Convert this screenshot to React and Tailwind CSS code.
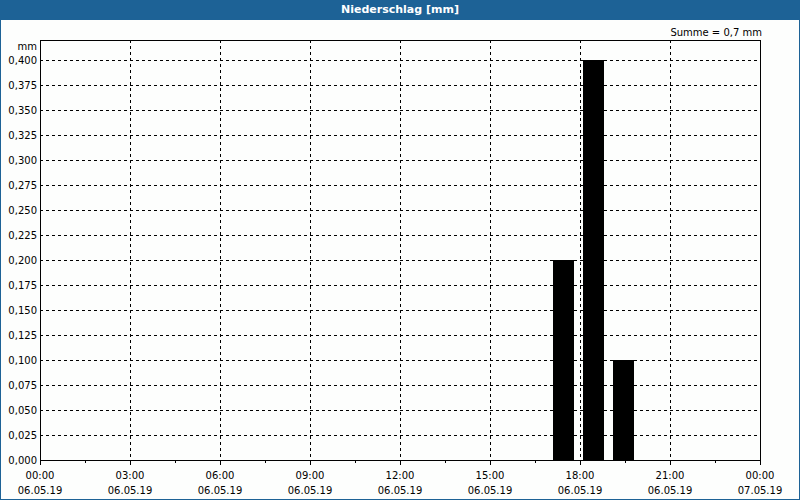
export default function App() {
  const yLabels = [];
  for (let i = 0; i <= 16; i++) yLabels.push(i);
  const xs = [0, 1, 2, 3, 4, 5, 6, 7, 8];
  const times = ["00:00","03:00","06:00","09:00","12:00","15:00","18:00","21:00","00:00"];
  const dates = ["06.05.19","06.05.19","06.05.19","06.05.19","06.05.19","06.05.19","06.05.19","06.05.19","07.05.19"];
  const f = (v) => (v * 0.025).toFixed(3).replace(".", ",");
  return (
    <div className="w-[800px] h-[500px] flex flex-col bg-[#1d6296] overflow-hidden" style={{fontFamily:'"DejaVu Sans", sans-serif'}}>
      <div className="h-[20px] flex items-center justify-center text-white text-[11px] font-bold shrink-0">Niederschlag [mm]</div>
      <div className="flex-1 mx-[1px] mb-[1px] bg-[#fdfefd] relative">
        <svg width="798" height="479" className="block" fontFamily="DejaVu Sans, sans-serif" fontSize="10">
          <g transform="translate(-1,-20)">
            <text x="762" y="36" textAnchor="end" fill="#000">Summe = 0,7 mm</text>
            <text x="37" y="50" textAnchor="end" fill="#000">mm</text>
            {yLabels.map(i => {
              const y = 460 - i * 25;
              return (
                <g key={i}>
                  {i > 0 && <line x1="40" x2="760" y1={y+0.5} y2={y+0.5} stroke="#000" strokeDasharray="3 3" />}
                  <text x="37" y={y+4} textAnchor="end" fill="#000">{f(i)}</text>
                </g>
              );
            })}
            {xs.map(i => {
              const x = 40 + i * 90;
              return (
                <g key={i}>
                  {i > 0 && i < 8 && <line x1={x+0.5} x2={x+0.5} y1="40" y2="460" stroke="#000" strokeDasharray="3 3" />}
                  <line x1={x+0.5} x2={x+0.5} y1="460" y2="465" stroke="#000" />
                  {i < 8 && <line x1={x+45.5} x2={x+45.5} y1="460" y2="463" stroke="#000" />}
                  <text x={x} y="479" textAnchor="middle" fill="#000">{times[i]}</text>
                  <text x={x} y="494" textAnchor="middle" fill="#000">{dates[i]}</text>
                </g>
              );
            })}
            <rect x="553" y="260" width="21" height="200" fill="#000" />
            <rect x="583" y="60" width="21" height="400" fill="#000" />
            <rect x="613" y="360" width="21" height="100" fill="#000" />
            <rect x="40.5" y="40.5" width="720" height="420" fill="none" stroke="#000" />
          </g>
        </svg>
      </div>
    </div>
  );
}
